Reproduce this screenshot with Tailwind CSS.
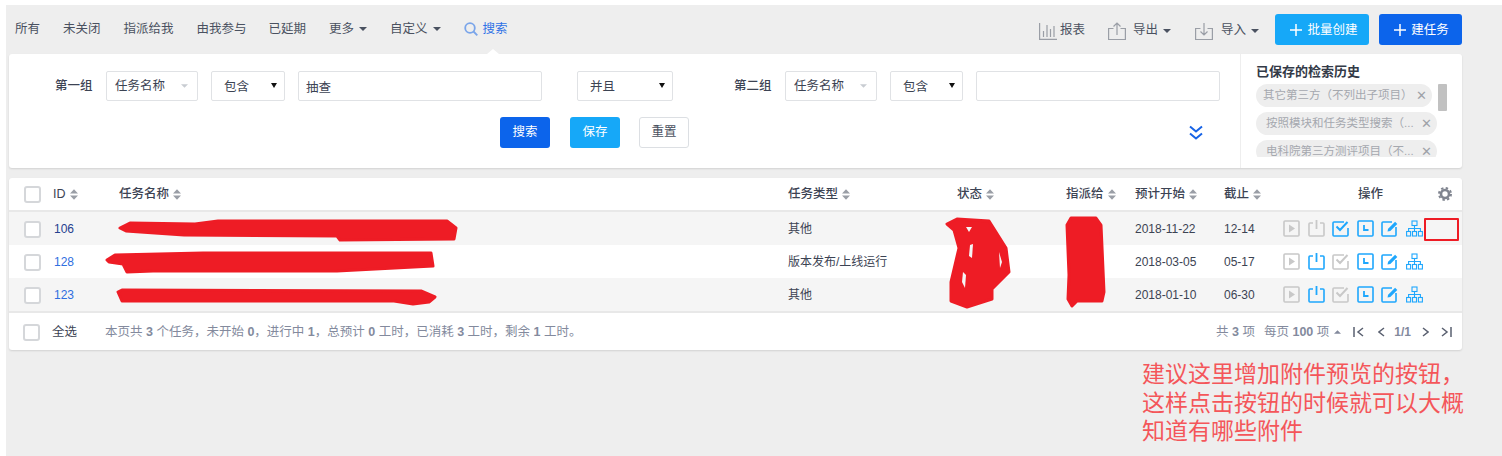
<!DOCTYPE html>
<html lang="zh">
<head>
  <meta charset="UTF-8">
  <title>任务列表</title>
  <script src="https://cdn.jsdelivr.net/npm/@tailwindcss/browser@4"></script>
</head>
<body class="bg-white font-['Liberation_Sans','Noto_Sans_CJK_SC',sans-serif] text-[12.5px] text-[#3c4353] overflow-hidden">
  <!-- icon set -->
  <svg class="hidden">
    <symbol id="sort" viewBox="0 0 9 12"><path d="M4.500 0L9 5H0zM4.500 12L0 7h9z" fill="currentColor"/></symbol>
    <symbol id="caret" viewBox="0 0 8 4"><path d="M0 0h8L4 4z" fill="currentColor"/></symbol>
    <symbol id="play" viewBox="0 0 17 17"><rect x="1" y="1" width="15" height="15" rx="1" fill="none" stroke="currentColor" stroke-width="1.600"/><path d="M6 4.500l6 4-6 4z" fill="currentColor"/></symbol>
    <symbol id="power" viewBox="0 0 17 17"><path d="M5 3H2a1 1 0 0 0-1 1v11a1 1 0 0 0 1 1h13a1 1 0 0 0 1-1V4a1 1 0 0 0-1-1h-3" fill="none" stroke="currentColor" stroke-width="1.600"/><path d="M8.500 0v9" stroke="currentColor" stroke-width="1.800"/></symbol>
    <symbol id="check" viewBox="0 0 17 17"><path d="M12 2H2a1 1 0 0 0-1 1v12a1 1 0 0 0 1 1h13a1 1 0 0 0 1-1V8" fill="none" stroke="currentColor" stroke-width="1.600"/><path d="M4.500 6.500l3.500 3.500 7.500-8" fill="none" stroke="currentColor" stroke-width="2"/></symbol>
    <symbol id="clock" viewBox="0 0 17 17"><rect x="1" y="1" width="15" height="15" rx="1" fill="none" stroke="currentColor" stroke-width="1.600"/><path d="M7 5v5h4.500" fill="none" stroke="currentColor" stroke-width="1.800"/></symbol>
    <symbol id="edit" viewBox="0 0 17 17"><path d="M11 2H2a1 1 0 0 0-1 1v12a1 1 0 0 0 1 1h12a1 1 0 0 0 1-1V7" fill="none" stroke="currentColor" stroke-width="1.600"/><path d="M6.500 11.500l0.600-2.800 7-7 2.200 2.200-7 7z" fill="currentColor"/></symbol>
    <symbol id="tree" viewBox="0 0 17 17"><g fill="none" stroke="currentColor" stroke-width="1.100"><rect x="6" y="1" width="5" height="4.500"/><rect x="0.600" y="11.500" width="4" height="4.500"/><rect x="6.500" y="11.500" width="4" height="4.500"/><rect x="12.400" y="11.500" width="4" height="4.500"/><path d="M8.500 5.500v6M2.600 11.500V8.500h11.800v3"/></g></symbol>
  </svg>

  <div class="relative ml-[6px] mt-[5px] h-[451px] bg-[#eeeeee] pl-[3px] pr-[40px]">
    <!-- toolbar -->
    <div class="flex h-[49px] items-center text-[#4a5160]">
      <nav class="flex items-center pl-[6px] -mt-[1px]">
        <a class="mr-[23px]">所有</a>
        <a class="mr-[23px]">未关闭</a>
        <a class="mr-[23px]">指派给我</a>
        <a class="mr-[22px]">由我参与</a>
        <a class="mr-[23px]">已延期</a>
        <a class="mr-[23px] flex items-center gap-[5px]">更多<svg class="w-[8px] h-[4px]"><use href="#caret"/></svg></a>
        <a class="mr-[23px] flex items-center gap-[5px]">自定义<svg class="w-[8px] h-[4px]"><use href="#caret"/></svg></a>
        <a class="flex items-center gap-[5px] text-[#2f72e6]">
          <svg class="w-[14px] h-[14px] text-[#7aa5ea]" viewBox="0 0 14 14" fill="none" stroke="currentColor" stroke-width="1.800"><circle cx="6" cy="6" r="4.800"/><path d="M9.500 9.500L13.300 13.300"/></svg>搜索
        </a>
      </nav>
      <div class="ml-auto flex items-center">
        <a class="mt-[2px] flex items-center gap-[3px] mr-[23px]">
          <svg class="w-[18px] h-[18px] text-[#9a9ea6]" viewBox="0 0 18 18" fill="none" stroke="currentColor" stroke-width="1.200"><path d="M0.600 1v16.400H18M4.500 9v6M8 3v12M11.500 7v8M15 4v11"/></svg>报表
        </a>
        <a class="mt-[2px] flex items-center gap-[7px] mr-[24px]">
          <svg class="w-[18px] h-[18px] text-[#9a9ea6]" viewBox="0 0 18 18" fill="none" stroke="currentColor" stroke-width="1.200"><path d="M5.500 6.500H0.600v11h16.800v-11h-4.900M9 13V1M5.500 4.500L9 1l3.500 3.500"/></svg>
          <span class="flex items-center gap-[5px]">导出<svg class="w-[8px] h-[4px]"><use href="#caret"/></svg></span>
        </a>
        <a class="mt-[2px] flex items-center gap-[8px] mr-[16px]">
          <svg class="w-[18px] h-[18px] text-[#9a9ea6]" viewBox="0 0 18 18" fill="none" stroke="currentColor" stroke-width="1.200"><path d="M5.500 6.500H0.600v11h16.800v-11h-4.900M9 1v12M5.500 9.500L9 13l3.500-3.500"/></svg>
          <span class="flex items-center gap-[5px]">导入<svg class="w-[8px] h-[4px]"><use href="#caret"/></svg></span>
        </a>
        <button class="flex h-[31px] w-[94px] items-center justify-center gap-[5px] rounded-[3px] bg-[#16a8f8] pt-[1px] pl-[4px] text-white mr-[10px]">
          <svg class="w-[12px] h-[12px]" viewBox="0 0 12 12" stroke="currentColor" stroke-width="1.500"><path d="M6 0v12M0 6h12"/></svg>批量创建
        </button>
        <button class="flex h-[31px] w-[83px] items-center justify-center gap-[5px] rounded-[3px] bg-[#0c64eb] pt-[1px] pl-[2px] text-white">
          <svg class="w-[12px] h-[12px]" viewBox="0 0 12 12" stroke="currentColor" stroke-width="1.500"><path d="M6 0v12M0 6h12"/></svg>建任务
        </button>
      </div>
    </div>

    <!-- search panel -->
    <div class="relative flex h-[114px] w-[1453px] rounded-[3px] bg-white shadow-[0_1px_2px_rgba(0,0,0,0.12)]">
      <span class="absolute -top-[5px] left-[478px] border-x-[6px] border-b-[5px] border-x-transparent border-b-white"></span>
      <div class="w-[1232px] border-r border-[#eeeeee] pt-[17px]">
        <div class="flex h-[30px] items-center">
          <label class="ml-[46px] w-[51px] font-medium">第一组</label>
          <div class="flex h-[30px] w-[92px] items-center justify-between border border-[#e0e2e5] pl-[8px] pr-[9px] rounded-[2px]">任务名称<svg class="w-[7px] h-[4px] text-[#c8ccd2]"><use href="#caret"/></svg></div>
          <div class="ml-[13px] flex h-[30px] w-[74px] items-center justify-between border border-[#e0e2e5] pl-[12px] pr-[7px] pt-[2px] rounded-[2px]">包含<svg class="w-[6px] h-[5px] -mt-[4px] text-[#111]" viewBox="0 0 6 5" preserveAspectRatio="none"><path d="M0 0h6L3 5z" fill="currentColor"/></svg></div>
          <input class="ml-[13px] h-[30px] w-[244px] border border-[#e0e2e5] px-[7px] rounded-[2px] outline-none" value="抽查">
          <div class="ml-[35px] flex h-[30px] w-[96px] items-center justify-between border border-[#e0e2e5] pl-[12px] pr-[7px] pt-[2px] rounded-[2px]">并且<svg class="w-[6px] h-[5px] -mt-[4px] text-[#111]" viewBox="0 0 6 5" preserveAspectRatio="none"><path d="M0 0h6L3 5z" fill="currentColor"/></svg></div>
          <label class="ml-[61px] w-[51px] font-medium">第二组</label>
          <div class="flex h-[30px] w-[92px] items-center justify-between border border-[#e0e2e5] pl-[8px] pr-[9px] rounded-[2px]">任务名称<svg class="w-[7px] h-[4px] text-[#c8ccd2]"><use href="#caret"/></svg></div>
          <div class="ml-[13px] flex h-[30px] w-[73px] items-center justify-between border border-[#e0e2e5] pl-[12px] pr-[7px] pt-[2px] rounded-[2px]">包含<svg class="w-[6px] h-[5px] -mt-[4px] text-[#111]" viewBox="0 0 6 5" preserveAspectRatio="none"><path d="M0 0h6L3 5z" fill="currentColor"/></svg></div>
          <input class="ml-[13px] h-[30px] w-[244px] border border-[#e0e2e5] px-[7px] rounded-[2px] outline-none">
        </div>
        <div class="mt-[16px] flex h-[31px] items-center">
          <button class="ml-[491px] h-[31px] w-[50px] rounded-[3px] bg-[#0c64eb] text-white">搜索</button>
          <button class="ml-[20px] h-[31px] w-[50px] rounded-[3px] bg-[#16a8f8] text-white">保存</button>
          <button class="ml-[19px] h-[31px] w-[50px] rounded-[3px] border border-[#dcdfe3] text-[#4a5160]">重置</button>
          <svg class="ml-[500px] w-[14px] h-[16px] text-[#1763e6]" viewBox="0 0 14 16" fill="none" stroke="currentColor" stroke-width="2"><path d="M1 1.500l6 5 6-5M1 8.500l6 5 6-5"/></svg>
        </div>
      </div>
      <div class="flex-1 pl-[15px] pt-[9px]">
        <h4 class="text-[13px] font-bold leading-[17px] text-[#333a47]">已保存的检索历史</h4>
        <div class="relative mt-[4px] h-[73px] overflow-hidden whitespace-nowrap text-[11.500px] text-[#a5a8ae]">
          <span class="absolute right-[15px] top-0 h-[27px] w-[9px] rounded-[1px] bg-[#c1c1c1]"></span>
          <div class="flex h-[23px] w-[176px] items-center justify-between rounded-full bg-[#eeeeee] pl-[7px] pr-[5px]">其它第三方（不列出子项目）<span class="text-[13px] text-[#9ea2a8]">✕</span></div>
          <div class="mt-[5px] flex h-[23px] w-[181px] items-center justify-between rounded-full bg-[#eeeeee] pl-[10px] pr-[5px]">按照模块和任务类型搜索（...<span class="text-[13px] text-[#9ea2a8]">✕</span></div>
          <div class="mt-[5px] flex h-[23px] w-[181px] items-center justify-between rounded-full bg-[#eeeeee] pl-[10px] pr-[5px]">电科院第三方测评项目（不...<span class="text-[13px] text-[#9ea2a8]">✕</span></div>
        </div>
      </div>
    </div>

    <!-- task table -->
    <div class="mt-[10px] h-[172px] w-[1453px] rounded-[3px] bg-white shadow-[0_1px_2px_rgba(0,0,0,0.12)]">
      <div class="grid h-[34px] grid-cols-[44px_66px_669px_169px_109px_69px_89px_59px_179px] items-center border-b-2 border-[#e8e8e8] font-medium">
        <span class="ml-[15px] h-[17px] w-[17px] rounded-[3px] border-2 border-[#d5d7da]"></span>
        <span class="flex items-center gap-[4px]">ID<svg class="w-[8px] h-[11px] text-[#9a9ea6]"><use href="#sort"/></svg></span>
        <span class="flex items-center gap-[4px]">任务名称<svg class="w-[8px] h-[11px] text-[#9a9ea6]"><use href="#sort"/></svg></span>
        <span class="flex items-center gap-[4px]">任务类型<svg class="w-[8px] h-[11px] text-[#9a9ea6]"><use href="#sort"/></svg></span>
        <span class="flex items-center gap-[4px]">状态<svg class="w-[8px] h-[11px] text-[#9a9ea6]"><use href="#sort"/></svg></span>
        <span class="flex items-center gap-[4px]">指派给<svg class="w-[8px] h-[11px] text-[#9a9ea6]"><use href="#sort"/></svg></span>
        <span class="flex items-center gap-[4px]">预计开始<svg class="w-[8px] h-[11px] text-[#9a9ea6]"><use href="#sort"/></svg></span>
        <span class="flex items-center gap-[4px]">截止<svg class="w-[8px] h-[11px] text-[#9a9ea6]"><use href="#sort"/></svg></span>
        <span class="flex items-center"><span class="ml-[75px]">操作</span><svg class="ml-[55px] w-[14px] h-[14px] text-[#808590]" viewBox="0 0 14 14" fill="none" stroke="currentColor"><circle cx="7" cy="7" r="4" stroke-width="2.600"/><circle cx="7" cy="7" r="6" stroke-width="2" stroke-dasharray="2.400 2.312"/></svg></span>
      </div>

      <div class="grid h-[33px] grid-cols-[44px_66px_669px_169px_109px_69px_89px_59px_179px] items-center bg-[#f5f5f5] text-[12px]">
        <span class="ml-[15px] mt-[2px] h-[17px] w-[17px] rounded-[3px] border-2 border-[#d5d7da] bg-white"></span>
        <a class="ml-[1px] text-[#26408f]">106</a><span></span><span>其他</span><span></span><span></span><span>2018-11-22</span><span>12-14</span>
        <span class="flex items-center gap-[7.500px]">
          <svg class="w-[17px] h-[17px] text-[#c8c8c8]"><use href="#play"/></svg>
          <svg class="w-[17px] h-[17px] text-[#c8c8c8]"><use href="#power"/></svg>
          <svg class="w-[17px] h-[17px] text-[#1ea7fd]"><use href="#check"/></svg>
          <svg class="w-[17px] h-[17px] text-[#1ea7fd]"><use href="#clock"/></svg>
          <svg class="w-[17px] h-[17px] text-[#1ea7fd]"><use href="#edit"/></svg>
          <svg class="w-[17px] h-[17px] text-[#1ea7fd]"><use href="#tree"/></svg>
        </span>
      </div>
      <div class="grid h-[33px] grid-cols-[44px_66px_669px_169px_109px_69px_89px_59px_179px] items-center text-[12px]">
        <span class="ml-[15px] mt-[2px] h-[17px] w-[17px] rounded-[3px] border-2 border-[#d5d7da] bg-white"></span>
        <a class="ml-[1px] text-[#2f6fe0]">128</a><span></span><span>版本发布/上线运行</span><span></span><span></span><span>2018-03-05</span><span>05-17</span>
        <span class="flex items-center gap-[7.500px]">
          <svg class="w-[17px] h-[17px] text-[#c8c8c8]"><use href="#play"/></svg>
          <svg class="w-[17px] h-[17px] text-[#1ea7fd]"><use href="#power"/></svg>
          <svg class="w-[17px] h-[17px] text-[#c8c8c8]"><use href="#check"/></svg>
          <svg class="w-[17px] h-[17px] text-[#1ea7fd]"><use href="#clock"/></svg>
          <svg class="w-[17px] h-[17px] text-[#1ea7fd]"><use href="#edit"/></svg>
          <svg class="w-[17px] h-[17px] text-[#1ea7fd]"><use href="#tree"/></svg>
        </span>
      </div>
      <div class="grid h-[33px] grid-cols-[44px_66px_669px_169px_109px_69px_89px_59px_179px] items-center bg-[#f5f5f5] text-[12px]">
        <span class="ml-[15px] mt-[2px] h-[17px] w-[17px] rounded-[3px] border-2 border-[#d5d7da] bg-white"></span>
        <a class="ml-[1px] text-[#2f6fe0]">123</a><span></span><span>其他</span><span></span><span></span><span>2018-01-10</span><span>06-30</span>
        <span class="flex items-center gap-[7.500px]">
          <svg class="w-[17px] h-[17px] text-[#c8c8c8]"><use href="#play"/></svg>
          <svg class="w-[17px] h-[17px] text-[#1ea7fd]"><use href="#power"/></svg>
          <svg class="w-[17px] h-[17px] text-[#c8c8c8]"><use href="#check"/></svg>
          <svg class="w-[17px] h-[17px] text-[#1ea7fd]"><use href="#clock"/></svg>
          <svg class="w-[17px] h-[17px] text-[#1ea7fd]"><use href="#edit"/></svg>
          <svg class="w-[17px] h-[17px] text-[#1ea7fd]"><use href="#tree"/></svg>
        </span>
      </div>

      <div class="flex h-[39px] items-center border-t-2 border-[#e8e8e8] pt-[1px]">
        <span class="ml-[14px] h-[17px] w-[17px] rounded-[3px] border-2 border-[#d5d7da]"></span>
        <span class="ml-[12px]">全选</span>
        <span class="ml-[28px] text-[#838a9d]">本页共 <b>3</b> 个任务，未开始 <b>0</b>，进行中 <b>1</b>，总预计 <b>0</b> 工时，已消耗 <b>3</b> 工时，剩余 <b>1</b> 工时。</span>
        <div class="ml-auto flex items-center pr-[10px] text-[#838a9d]">
          <span>共 <b>3</b> 项</span>
          <span class="ml-[9px]">每页 <b>100</b> 项</span>
          <svg class="ml-[5px] w-[7px] h-[4px] rotate-180"><use href="#caret"/></svg>
          <svg class="ml-[12px] w-[11px] h-[10px] text-[#5a6070]" viewBox="0 0 11 10" fill="none" stroke="currentColor" stroke-width="1.500"><path d="M1 0v10M10 1L5 5l5 4"/></svg>
          <svg class="ml-[14px] w-[7px] h-[10px] text-[#5a6070]" viewBox="0 0 7 10" fill="none" stroke="currentColor" stroke-width="1.500"><path d="M6 1L1 5l5 4"/></svg>
          <b class="ml-[9px] text-[12px]">1/1</b>
          <svg class="ml-[11px] w-[7px] h-[10px] text-[#5a6070]" viewBox="0 0 7 10" fill="none" stroke="currentColor" stroke-width="1.500"><path d="M1 1l5 4-5 4"/></svg>
          <svg class="ml-[12px] w-[11px] h-[10px] text-[#5a6070]" viewBox="0 0 11 10" fill="none" stroke="currentColor" stroke-width="1.500"><path d="M10 0v10M1 1l5 4-5 4"/></svg>
        </div>
      </div>
    </div>

    <!-- reviewer's markup on top of the screenshot -->
    <svg class="absolute -left-[6px] -top-[5px] w-[1502px] h-[456px] pointer-events-none" viewBox="0 0 1502 456" fill="#ee1c25" stroke="#ee1c25" stroke-width="3" stroke-linejoin="round">
      <path d="M120 228L130 223L195 224L218 221L447 221L456 228L454 239L340 240L337 236L184 235L126 231Z"/>
      <path d="M107 260L115 255L203 253L431 253L433 266L337 271L153 271L127 272L123 264L109 262Z"/>
      <path d="M118 292L122 290L421 291L435 297L429 302L413 304L394 301L122 301Z"/>
      <path d="M947 224L957 219L989 221L1006 248L1009 272L992 289L992 299L967 307L951 301L951 282L959 248L954 230Z"/>
      <path d="M1067 225L1071 218L1096 218L1101 225L1104 292L1102 301L1077 301L1072 306L1068 299L1069 275Z"/>
      <g fill="#f5f5f5" stroke="none">
        <path d="M966 227L972 227L969 232Z"/>
        <path d="M970 245L973 244L972 258L969 256Z"/>
        <path d="M963 272L966 275L965 288L962 282Z"/>
        <path d="M999 252L1002 262L1000 268Z"/>
      </g>
      <rect x="1425" y="219" width="33" height="21" fill="none" stroke-width="2"/>
    </svg>
    <div class="absolute left-[1136px] top-[355px] text-[23px] leading-[28.500px] text-[#f4565a]">
      建议这里增加附件预览的按钮，<br>这样点击按钮的时候就可以大概<br>知道有哪些附件
    </div>
  </div>
</body>
</html>
